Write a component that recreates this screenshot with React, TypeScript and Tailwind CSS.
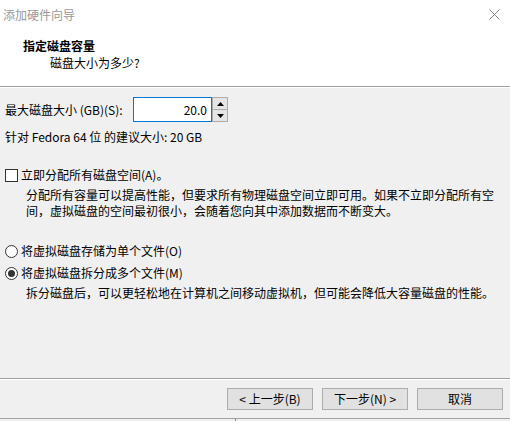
import React from 'react';

const Btn = ({ children }: { children: React.ReactNode }) => (
  <button className="w-[86px] h-[22px] bg-[#e1e1e1] border border-[#adadad] text-[12px] leading-[16px] text-black">
    {children}
  </button>
);

const Radio = ({ checked }: { checked?: boolean }) => (
  <span className="w-[13px] h-[13px] rounded-full border border-[#333] bg-white flex items-center justify-center shrink-0">
    {checked && <span className="w-[7px] h-[7px] rounded-full bg-[#333]" />}
  </span>
);

export default function App() {
  return (
    <div className="w-[510px] h-[421px] bg-[#f0f0f0] flex flex-col text-[12px] leading-[16px] text-black font-['Noto_Sans_CJK_SC','Microsoft_YaHei',sans-serif] overflow-hidden">
      {/* header */}
      <div className="h-[86px] bg-white shrink-0">
        <div className="h-[29px] flex items-center justify-between pl-[3px] pr-[10px]">
          <span className="text-[#999]">添加硬件向导</span>
          <svg width="11" height="11" viewBox="0 0 11 11">
            <path d="M0.5 0.5 L10.5 10.5 M10.5 0.5 L0.5 10.5" stroke="#888" strokeWidth="1" />
          </svg>
        </div>
        <div className="pl-[23px] mt-[9px] font-bold">指定磁盘容量</div>
        <div className="pl-[50px] mt-[1px]">磁盘大小为多少?</div>
      </div>
      <div className="h-px bg-[#a0a0a0] shrink-0" />
      <div className="h-px bg-white shrink-0" />

      {/* body */}
      <div className="flex-1 px-[5px]">
        <div className="mt-[9px] flex items-center h-[25px]">
          <span className="w-[128px]">最大磁盘大小 (GB)(S):</span>
          <div className="w-[79px] h-[25px] border border-[#0078d7] bg-white flex items-center justify-end pr-[4px]">
            20.0
          </div>
          <div className="w-[16px] h-[25px] border border-[#adadad] bg-[#f0f0f0] flex flex-col">
            <div className="flex-1 flex items-center justify-center border-b border-[#adadad] bg-[#e5e5e5]">
              <svg width="7" height="4" viewBox="0 0 7 4"><path d="M3.5 0 L7 4 L0 4 Z" fill="#000" /></svg>
            </div>
            <div className="flex-1 flex items-center justify-center bg-[#e5e5e5]">
              <svg width="7" height="4" viewBox="0 0 7 4"><path d="M0 0 L7 0 L3.5 4 Z" fill="#000" /></svg>
            </div>
          </div>
        </div>
        <div className="mt-[7px]">针对 Fedora 64 位 的建议大小: 20 GB</div>

        <div className="mt-[22px] flex items-center gap-[3px]">
          <span className="w-[13px] h-[13px] border border-[#333] bg-white shrink-0" />
          <span>立即分配所有磁盘空间(A)。</span>
        </div>
        <div className="mt-[4px] pl-[21px]">
          <div>分配所有容量可以提高性能，但要求所有物理磁盘空间立即可用。如果不立即分配所有空</div>
          <div>间，虚拟磁盘的空间最初很小，会随着您向其中添加数据而不断变大。</div>
        </div>

        <div className="mt-[24px] flex items-center gap-[3px]">
          <Radio />
          <span>将虚拟磁盘存储为单个文件(O)</span>
        </div>
        <div className="mt-[6px] flex items-center gap-[3px]">
          <Radio checked />
          <span>将虚拟磁盘拆分成多个文件(M)</span>
        </div>
        <div className="mt-[4px] pl-[21px]">拆分磁盘后，可以更轻松地在计算机之间移动虚拟机，但可能会降低大容量磁盘的性能。</div>
      </div>

      {/* footer */}
      <div className="h-px bg-[#a0a0a0] shrink-0" />
      <div className="h-px bg-white shrink-0" />
      <div className="h-[38px] shrink-0 flex justify-end gap-[9px] pr-[7px] pt-[8px]">
        <Btn>&lt; 上一步(B)</Btn>
        <Btn>下一步(N) &gt;</Btn>
        <Btn>取消</Btn>
      </div>
      <div className="h-px bg-[#a0a0a0] shrink-0" />
      <div className="h-[2px] shrink-0 pl-[235px]">
        <div className="w-px h-full bg-[#888]" />
      </div>
    </div>
  );
}
